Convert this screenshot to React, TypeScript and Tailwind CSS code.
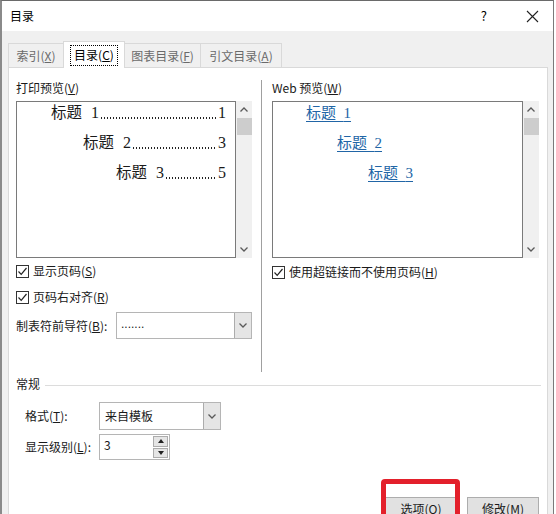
import React, {FC} from 'react';

const font = {fontFamily: '"Microsoft YaHei UI", "Noto Sans CJK SC", sans-serif'};
const serif = {fontFamily: '"Liberation Serif", "Noto Sans CJK SC", serif'};

const Chevron: FC<{up?: boolean; className?: string}> = ({up, className}) => (
  <svg width="8" height="5" viewBox="0 0 8 5" className={className}>
    <polyline
      points={up ? '0.5,4.5 4,1 7.5,4.5' : '0.5,0.5 4,4 7.5,0.5'}
      fill="none"
      stroke="#5a5a5a"
      strokeWidth="1.3"
    />
  </svg>
);

const ScrollBar: FC = () => (
  <div className="w-[16px] h-full bg-[#f0f0f0] flex flex-col items-center">
    <div className="h-[17px] flex items-center justify-center"><Chevron up /></div>
    <div className="w-[15px] h-[17px] bg-[#cdcdcd]" />
    <div className="flex-1" />
    <div className="h-[17px] flex items-center justify-center"><Chevron /></div>
  </div>
);

const Check: FC<{label: React.ReactNode}> = ({label}) => (
  <div className="flex items-center h-[20px] gap-[4px]">
    <div className="w-[13px] h-[13px] border border-[#333] bg-white flex items-center justify-center">
      <svg width="11" height="11" viewBox="0 0 11 11">
        <polyline points="1.5,5.5 4.2,8.3 9.5,2" fill="none" stroke="#222" strokeWidth="1.2" />
      </svg>
    </div>
    <span className="text-[12px] leading-[14px] text-[#1a1a1a]">{label}</span>
  </div>
);

const DropButton: FC = () => (
  <div className="w-[17px] h-full bg-[#e5e5e5] border-l border-[#acacac] flex items-center justify-center">
    <Chevron />
  </div>
);

// dotted tab leader drawn as a repeating dot background
const Leader: FC<{pad: number; n: string; page: string}> = ({pad, n, page}) => (
  <div className="flex items-end h-[20px] pr-[9px]" style={{paddingLeft: pad}}>
    <span className="text-[15.5px] leading-[20px] whitespace-nowrap">标题</span>
    <span className="text-[16px] leading-[20px] ml-[9px]">{n}</span>
    <span className="flex-1 min-w-0 h-[2px] mb-[4px] mx-[1px] bg-[radial-gradient(circle,#222_40%,transparent_60%)] bg-[length:3px_2px] bg-repeat-x" />
    <span className="text-[16px] leading-[20px]">{page}</span>
  </div>
);

const WebLink: FC<{pad: number; n: string}> = ({pad, n}) => (
  <div className="h-[20px] flex items-center" style={{paddingLeft: pad}}>
    <span className="text-[15px] leading-[20px] text-[#2165a6] underline underline-offset-[3px] whitespace-pre">
      标题  {n}
    </span>
  </div>
);

const Tab: FC<{label: React.ReactNode; w: number}> = ({label, w}) => (
  <div
    className="h-[24px] bg-[#f0f0f0] border border-b-0 border-[#d9d9d9] -ml-px flex items-center justify-center text-[12px] text-[#6a6a6a]"
    style={{width: w}}
  >
    {label}
  </div>
);

const App: FC = () => (
  <div className="w-[556px] h-[514px] overflow-hidden relative bg-white" style={font}>
    <div className="w-[554px] h-[514px] bg-[#f0f0f0] border-l-2 border-t border-r border-l-[#8a8a8a] border-t-[#6a6a6a] border-r-[#7a7a7a] flex flex-col">
      {/* title bar */}
      <div className="h-[30px] shrink-0 bg-white flex items-center pl-[8px] text-[12px] text-black">
        <span>目录</span>
        <span className="ml-auto mr-[39px] text-[13px]">?</span>
        <svg width="13" height="13" viewBox="0 0 13 13" className="mr-[14px]">
          <path d="M1 1L12 12M12 1L1 12" stroke="#222" strokeWidth="1.1" />
        </svg>
      </div>

      {/* tabs */}
      <div className="h-[36px] shrink-0 flex items-end pl-[7px]">
        <Tab w={56} label={<>索引(<u>X</u>)</>} />
        <div className="w-[62px] h-[27px] -ml-px -mb-px z-10 bg-white border border-b-0 border-[#d9d9d9] flex items-center justify-center">
          <span className="border border-dotted border-black px-[3px] h-[21px] flex items-center text-[12px] text-black">
            目录(<u>C</u>)
          </span>
        </div>
        <Tab w={77} label={<>图表目录(<u>F</u>)</>} />
        <Tab w={82} label={<>引文目录(<u>A</u>)</>} />
      </div>

      {/* panel */}
      <div className="ml-[6px] w-[540px] flex-1 shrink-0 bg-white border border-[#d9d9d9] pl-[7px] pt-[12px] text-[12px] text-[#1a1a1a]">
        <div className="flex h-[292px]">
          <div className="w-[236px] flex flex-col">
            <div className="mt-[1px] h-[14px] leading-[14px]">打印预览(<u>V</u>)</div>
            <div className="mt-[6px] h-[157px] flex">
              <div className="w-[220px] h-full border border-[#7a7a7a] pt-[1px] flex flex-col gap-[10px]" style={serif}>
                <Leader pad={34} n="1" page="1" />
                <Leader pad={66} n="2" page="3" />
                <Leader pad={99} n="3" page="5" />
              </div>
              <ScrollBar />
            </div>
            <div className="mt-[3px]"><Check label={<>显示页码(<u>S</u>)</>} /></div>
            <div className="mt-[6px]"><Check label={<>页码右对齐(<u>R</u>)</>} /></div>
            <div className="mt-[5px] flex items-center h-[27px]">
              <span className="w-[100px]">制表符前导符(<u>B</u>):</span>
              <div className="w-[136px] h-full border border-[#b5b5b5] flex">
                <span className="flex-1 pl-[4px] leading-[22px] text-[12px] font-['Liberation_Sans']">.......</span>
                <DropButton />
              </div>
            </div>
          </div>
          <div className="w-px bg-[#a0a0a0] ml-[9px]" />
          <div className="w-[267px] ml-[10px] flex flex-col">
            <div className="mt-[1px] h-[14px] leading-[14px]">Web 预览(<u>W</u>)</div>
            <div className="mt-[6px] h-[157px] flex">
              <div className="w-[251px] h-full border border-[#7a7a7a] pt-[1px] flex flex-col gap-[10px]" style={serif}>
                <WebLink pad={33} n="1" />
                <WebLink pad={64} n="2" />
                <WebLink pad={95} n="3" />
              </div>
              <ScrollBar />
            </div>
            <div className="mt-[4px]"><Check label={<>使用超链接而不使用页码(<u>H</u>)</>} /></div>
          </div>
        </div>

        {/* general */}
        <div className="mt-[5px] h-[14px] flex items-center">
          <span className="leading-[14px]">常规</span>
          <div className="flex-1 h-px bg-[#dcdcdc] ml-[5px] mr-[6px] mt-[2px]" />
        </div>
        <div className="mt-[11px] h-[28px] flex items-center pl-[9px]">
          <span className="w-[74px]">格式(<u>T</u>):</span>
          <div className="w-[122px] h-full border border-[#b5b5b5] flex">
            <span className="flex-1 pl-[5px] leading-[26px] text-[12px]">来自模板</span>
            <DropButton />
          </div>
        </div>
        <div className="mt-[4px] h-[26px] flex items-center pl-[9px]">
          <span className="w-[74px]">显示级别(<u>L</u>):</span>
          <div className="w-[71px] h-full border border-[#b5b5b5] flex">
            <span className="flex-1 pl-[4px] leading-[20px]">3</span>
            <div className="w-[16px] flex flex-col gap-px py-[1px] pr-[1px]">
              <div className="flex-1 bg-[#e5e5e5] border border-[#acacac] flex items-center justify-center">
                <svg width="6" height="4" viewBox="0 0 6 4"><polygon points="0,4 3,0 6,4" fill="#222" /></svg>
              </div>
              <div className="flex-1 bg-[#e5e5e5] border border-[#acacac] flex items-center justify-center">
                <svg width="6" height="4" viewBox="0 0 6 4"><polygon points="0,0 3,4 6,0" fill="#222" /></svg>
              </div>
            </div>
          </div>
        </div>

        <div className="mt-[37px] flex justify-end gap-[10px] pr-[8px]">
          <div className="w-[72px] h-[23px] bg-[#e1e1e1] border border-[#adadad] flex items-center justify-center">
            选项(<u>O</u>)
          </div>
          <div className="w-[72px] h-[23px] bg-[#e1e1e1] border border-[#adadad] flex items-center justify-center">
            修改(<u>M</u>)
          </div>
        </div>
      </div>
    </div>

    {/* red annotation box */}
    <div className="absolute left-[381px] top-[479px] w-[79px] h-[50px] border-[5px] border-[#e3202b] rounded-[4px]" />
  </div>
);

export default App;
